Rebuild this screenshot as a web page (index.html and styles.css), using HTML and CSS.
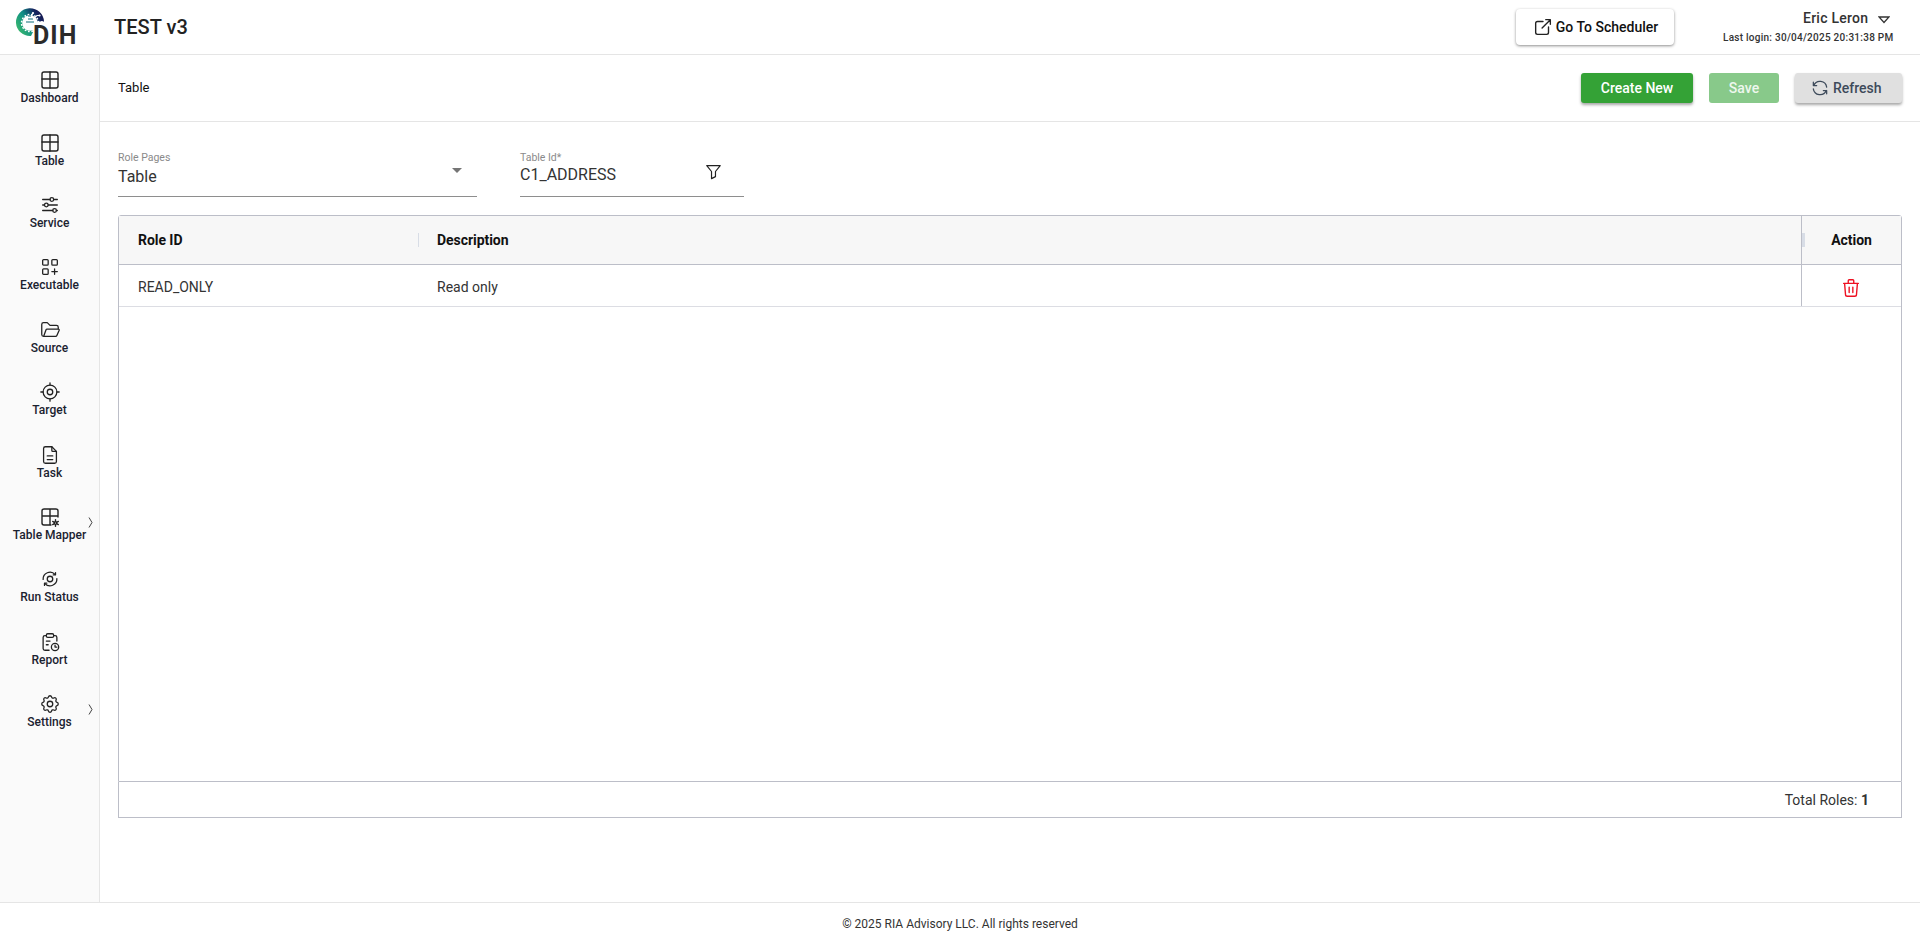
FILE: index.html
```html
<!DOCTYPE html>
<html lang="en">
<head>
<meta charset="utf-8">
<title>TEST v3</title>
<link rel="stylesheet" href="styles.css">
</head>
<body>
<svg class="sprites" width="0" height="0" aria-hidden="true">
  <symbol id="i-table" viewBox="-1 -1 22 22"><rect x="2" y="2" width="16" height="16" rx="2"/><path d="M2 9h16M10 2v16"/></symbol>
</svg>
<header class="topbar">
  <div class="brand">
    <svg class="logo-mark" viewBox="0 0 30 30" width="30" height="30" aria-hidden="true">
      <defs><linearGradient id="lg" x1="0" y1=".8" x2="1" y2=".2"><stop offset="0" stop-color="#3dbb6c"/><stop offset=".45" stop-color="#0e8e86"/><stop offset=".8" stop-color="#15235f"/><stop offset="1" stop-color="#16144a"/></linearGradient></defs>
      <path d="M29 13.500A14 14 0 0 0 1 15a14 14 0 0 0 15 13l2-4-2-9z" fill="url(#lg)"/>
      <circle class="gear-teeth" cx="15" cy="15" r="8.500"/>
      <circle cx="15" cy="15" r="7.800" fill="#fff"/>
      <path class="trace-in" d="M13 11h5M11 14h8M13 8l3 0"/>
      <path class="trace-out" d="M18 11l4-3.500h2M19 14h8M16 8l2-3"/>
      <circle cx="24.500" cy="7.500" r="1.100" fill="#fff"/>
      <circle cx="27" cy="14" r="1.100" fill="#fff"/>
      <circle cx="18" cy="5" r="1.100" fill="#fff"/>
    </svg>
    <span class="logo-text">DIH</span>
  </div>
  <h1 class="app-title">TEST v3</h1>
  <button class="scheduler-btn" type="button">
    <svg class="ico22" viewBox="0 0 24 24" aria-hidden="true"><path d="M12 6H6a2 2 0 0 0-2 2v10a2 2 0 0 0 2 2h10a2 2 0 0 0 2-2v-6"/><path d="M11 13l9-9M15 4h5v5"/></svg>
    Go To Scheduler
  </button>
  <div class="user">
    <div class="user-name">Eric Leron
      <svg class="user-caret" viewBox="0 0 12 8" width="12" height="8" aria-hidden="true"><path d="M1 1h10L6 6.500z"/></svg>
    </div>
    <div class="last-login">Last login: 30/04/2025 20:31:38 PM</div>
  </div>
</header>

<div class="body-row">
  <nav class="sidebar">
    <a class="nav-item"><svg class="nav-ico" viewBox="0 0 22 22"><use href="#i-table"/></svg><span>Dashboard</span></a>
    <a class="nav-item"><svg class="nav-ico" viewBox="0 0 22 22"><use href="#i-table"/></svg><span>Table</span></a>
    <a class="nav-item"><svg class="nav-ico" viewBox="0 0 24 24"><circle cx="14" cy="6" r="2"/><path d="M4 6h8M16 6h4"/><circle cx="8" cy="12" r="2"/><path d="M4 12h2M10 12h10"/><circle cx="17" cy="18" r="2"/><path d="M4 18h11M19 18h1"/></svg><span>Service</span></a>
    <a class="nav-item"><svg class="nav-ico" viewBox="0 0 24 24"><rect x="4" y="4" width="6" height="6" rx="1"/><rect x="14" y="4" width="6" height="6" rx="1"/><rect x="4" y="14" width="6" height="6" rx="1"/><path d="M14 17h6M17 14v6"/></svg><span>Executable</span></a>
    <a class="nav-item"><svg class="nav-ico" viewBox="0 0 24 24"><path d="M5 19l2.800-7.500A1 1 0 0 1 8.700 11H21a1 1 0 0 1 1 1.300L19.500 18a1.500 1.500 0 0 1-1.400 1H5a2 2 0 0 1-2-2V6a2 2 0 0 1 2-2h4l3 3h7a2 2 0 0 1 2 2v2"/></svg><span>Source</span></a>
    <a class="nav-item"><svg class="nav-ico" viewBox="0 0 24 24"><circle cx="12" cy="12" r="3"/><circle cx="12" cy="12" r="7.500"/><path d="M12 2v2.500M12 19.500V22M2 12h2.500M19.500 12H22"/></svg><span>Target</span></a>
    <a class="nav-item"><svg class="nav-ico" viewBox="0 0 24 24"><path d="M14 3v4a1 1 0 0 0 1 1h4"/><path d="M17 21H7a2 2 0 0 1-2-2V5a2 2 0 0 1 2-2h7l5 5v11a2 2 0 0 1-2 2z"/><path d="M9 13h6M9 17h6"/></svg><span>Task</span></a>
    <a class="nav-item has-sub"><svg class="nav-ico" viewBox="-1 -1 22 22"><path d="M18 10V4a2 2 0 0 0-2-2H4a2 2 0 0 0-2 2v12a2 2 0 0 0 2 2h7M2 9h16M10 2v16"/><circle cx="15.500" cy="16" r="1.300"/><path d="M15.500 12.700v1.300M15.500 18v1.300M12.700 14.400l1.200.7M17.100 16.900l1.200.7M12.700 17.600l1.200-.7M17.100 15.100l1.200-.7"/></svg><span>Table Mapper</span>
      <svg class="nav-chevron" viewBox="0 0 5 11"><path d="M1 .5l3 5-3 5"/></svg></a>
    <a class="nav-item"><svg class="nav-ico" viewBox="0 0 24 24"><circle cx="12" cy="12" r="3"/><path d="M4.500 12.500A7.500 7.500 0 0 1 17.500 7"/><path d="M19.500 11.500A7.500 7.500 0 0 1 6.500 17"/><path d="M18 5v2.500h-2.500M6 19v-2.500h2.500"/></svg><span>Run Status</span></a>
    <a class="nav-item"><svg class="nav-ico" viewBox="0 0 24 24"><path d="M8 5H6.500A2 2 0 0 0 4.500 7v12a2 2 0 0 0 2 2H11M16 5h1.500a2 2 0 0 1 2 2v4"/><rect x="8" y="3" width="8" height="4" rx="1.500"/><path d="M8 11h4M8 15h2"/><circle cx="17.500" cy="17.500" r="4"/><path d="M17.500 15.500v2h2"/></svg><span>Report</span></a>
    <a class="nav-item has-sub"><svg class="nav-ico" viewBox="0 0 24 24"><path d="M10.325 4.317c.426-1.756 2.924-1.756 3.350 0a1.724 1.724 0 0 0 2.573 1.066c1.543-.94 3.310.826 2.370 2.370a1.724 1.724 0 0 0 1.065 2.572c1.756.426 1.756 2.924 0 3.350a1.724 1.724 0 0 0-1.066 2.573c.94 1.543-.826 3.310-2.370 2.370a1.724 1.724 0 0 0-2.572 1.065c-.426 1.756-2.924 1.756-3.350 0a1.724 1.724 0 0 0-2.573-1.066c-1.543.94-3.310-.826-2.370-2.370a1.724 1.724 0 0 0-1.065-2.572c-1.756-.426-1.756-2.924 0-3.350a1.724 1.724 0 0 0 1.066-2.573c-.94-1.543.826-3.310 2.370-2.370 1 .608 2.296.07 2.572-1.065z"/><circle cx="12" cy="12" r="3"/></svg><span>Settings</span>
      <svg class="nav-chevron" viewBox="0 0 5 11"><path d="M1 .5l3 5-3 5"/></svg></a>
  </nav>

  <main class="content">
    <div class="subbar">
      <div class="crumb">Table</div>
      <div class="actions">
        <button class="btn btn-green" type="button">Create New</button>
        <button class="btn btn-save" type="button">Save</button>
        <button class="btn btn-grey" type="button">
          <svg class="ico20" viewBox="0 0 24 24" aria-hidden="true"><path d="M20 11A8.100 8.100 0 0 0 4.500 9M4 5v4h4"/><path d="M4 13a8.100 8.100 0 0 0 15.500 2m.5 4v-4h-4"/></svg>
          Refresh
        </button>
      </div>
    </div>

    <div class="panel">
      <div class="filters">
        <div class="field field-role">
          <label class="field-label">Role Pages</label>
          <div class="field-value">Table<span class="select-caret"></span></div>
        </div>
        <div class="field field-id">
          <label class="field-label">Table Id*</label>
          <div class="field-value">C1_ADDRESS
            <svg class="filter-ico" viewBox="0 0 24 24" aria-hidden="true"><path d="M3.500 4.500h17L14.500 12v6.500l-5 2.500v-9z"/></svg>
          </div>
        </div>
      </div>

      <div class="grid">
        <div class="grid-body">
          <div class="grid-row grid-head">
            <div class="cell cell-role">Role ID</div>
            <div class="cell cell-desc"><i class="col-sep"></i>Description</div>
            <div class="cell cell-action"><i class="col-sep"></i>Action</div>
          </div>
          <div class="grid-row grid-data">
            <div class="cell cell-role">READ_ONLY</div>
            <div class="cell cell-desc">Read only</div>
            <div class="cell cell-action">
              <svg class="trash" viewBox="0 0 24 24" aria-hidden="true"><path d="M4 7h16M10 11v6M14 11v6M5 7l1 12a2 2 0 0 0 2 2h8a2 2 0 0 0 2-2l1-12M9 7V4a1 1 0 0 1 1-1h4a1 1 0 0 1 1 1v3"/></svg>
            </div>
          </div>
        </div>
        <div class="grid-foot">Total Roles:&nbsp;<b>1</b></div>
      </div>
    </div>
  </main>
</div>

<footer class="footer">© 2025 RIA Advisory LLC. All rights reserved</footer>
</body>
</html>
```
FILE: styles.css
```css
* { box-sizing: border-box; }
html, body { height: 100%; }
body {
  margin: 0;
  height: 945px;
  display: flex;
  flex-direction: column;
  font-family: Roboto, "Liberation Sans", sans-serif;
  color: #1f2733;
  background: #fff;
  overflow: hidden;
}
.sprites { position: absolute; }

.topbar {
  height: 55px;
  flex: none;
  display: flex;
  align-items: center;
  border-bottom: 1px solid #e5e5e5;
  padding-right: 27px;
}
.brand {
  width: 114px;
  height: 54px;
  flex: none;
  position: relative;
}
.logo-mark { position: absolute; left: 15px; top: 8px; }
.gear-teeth { fill: none; stroke: #fff; stroke-width: 1.500; stroke-dasharray: 1.700 1.700; }
.trace-in { fill: none; stroke: #0f6f7a; stroke-width: 1.100; }
.trace-out { fill: none; stroke: #fff; stroke-width: 1.100; }
.logo-text {
  position: absolute;
  left: 33px;
  top: 22px;
  font: 700 25px/28px Roboto, sans-serif;
  letter-spacing: 1.100px;
  color: #2b2b2b;
}
.app-title {
  margin: 0;
  font-size: 20px;
  font-weight: 500;
  letter-spacing: .05px;
  color: #222;
}
.scheduler-btn {
  margin-left: auto;
  width: 158px;
  height: 36px;
  border: 0;
  border-radius: 4px;
  background: #fff;
  box-shadow: 0 1px 3px rgba(0,0,0,.45);
  display: flex;
  align-items: center;
  justify-content: center;
  gap: 2px;
  font: 500 14px Roboto, sans-serif;
  color: #111;
  padding: 0;
}
.ico22 { width: 22px; height: 22px; fill: none; stroke: #222; stroke-width: 1.500; stroke-linecap: round; stroke-linejoin: round; }
.user {
  width: 170px;
  margin-left: 49px;
  text-align: right;
}
.user-name {
  font-size: 14px;
  font-weight: 500;
  letter-spacing: .25px;
  line-height: 18px;
  color: #333;
  padding-right: 3px;
}
.user-caret { fill: none; stroke: #333; stroke-width: 1.300; margin-left: 6px; vertical-align: -1px; }
.last-login {
  margin-top: 4px;
  font-size: 10px;
  font-weight: 500;
  line-height: 14px;
  letter-spacing: .26px;
  white-space: nowrap;
  color: #333;
}

.body-row { flex: 1; display: flex; min-height: 0; }

.sidebar {
  width: 100px;
  flex: none;
  background: #fafafa;
  border-right: 1px solid #e5e5e5;
  padding-top: 2px;
}
.nav-item {
  height: 62.400px;
  display: flex;
  flex-direction: column;
  align-items: center;
  justify-content: center;
  position: relative;
  font-size: 12px;
  line-height: 16px;
  font-weight: 500;
  color: #1a2230;
  padding-bottom: 1px;
}
.nav-ico {
  width: 22px;
  height: 22px;
  fill: none;
  stroke: #222;
  stroke-width: 1.400;
  stroke-linecap: round;
  stroke-linejoin: round;
  margin-bottom: -1px;
}
.nav-chevron {
  position: absolute;
  right: 6px;
  top: 23px;
  width: 5px;
  height: 11px;
  fill: none;
  stroke: #444;
  stroke-width: 1;
}

.content { flex: 1; min-width: 0; display: flex; flex-direction: column; }
.subbar {
  height: 67px;
  flex: none;
  display: flex;
  align-items: center;
  border-bottom: 1px solid #e5e5e5;
  padding: 0 18px;
}
.crumb { font-size: 13px; font-weight: 400; color: #111; margin-top: -2px; }
.actions { margin-left: auto; display: flex; gap: 16px; }
.btn {
  height: 30px;
  border: 0;
  border-radius: 3px;
  display: flex;
  align-items: center;
  justify-content: center;
  gap: 6px;
  padding: 0;
  font: 500 14px Roboto, sans-serif;
}
.btn-green { width: 112px; background: #34a236; color: #fff; box-shadow: 0 2px 3px rgba(0,0,0,.35); }
.btn-save { width: 70px; background: #88c98a; color: #eef7ee; }
.btn-grey {
  width: 107px;
  background: #e0e0e0;
  color: #3d4a5a;
  box-shadow: 0 2px 3px rgba(0,0,0,.35);
  justify-content: flex-start;
  padding-left: 15px;
  gap: 3px;
}
.ico20 { width: 20px; height: 20px; fill: none; stroke: #3d4a5a; stroke-width: 1.500; stroke-linecap: round; stroke-linejoin: round; }

.panel { padding: 0 18px; }
.filters { height: 93px; display: flex; gap: 43px; padding-top: 29px; }
.field { height: 46px; border-bottom: 1px solid #8e8e8e; }
.field-role { width: 359px; }
.field-id { width: 224px; }
.field-label { display: block; font-size: 10.500px; line-height: 14px; color: #8a8a8a; }
.field-value {
  position: relative;
  font-size: 16px;
  line-height: 20px;
  margin-top: 2px;
  color: #333;
}
.select-caret {
  position: absolute;
  right: 15px;
  top: 1px;
  border: 5px solid transparent;
  border-top: 5px solid #757575;
}
.field-id .field-value { margin-top: 0; }
.filter-ico {
  position: absolute;
  right: 21px;
  top: -3px;
  width: 19px;
  height: 19px;
  fill: none;
  stroke: #222;
  stroke-width: 1.500;
  stroke-linejoin: round;
}

.grid { width: 1784px; }
.grid-body {
  height: 567px;
  border: 1px solid #bcbec8;
  border-radius: 3px 3px 0 0;
}
.grid-row { display: flex; }
.grid-head {
  height: 49px;
  background: #f7f7f7;
  border-bottom: 1px solid #bcbec8;
  font-size: 14px;
  font-weight: 700;
  letter-spacing: -.05px;
  color: #111;
}
.grid-data {
  height: 42px;
  border-bottom: 1px solid #dcdde3;
  font-size: 14px;
  color: #333;
}
.grid-data .cell { padding-top: 2px; }
.cell { display: flex; align-items: center; position: relative; }
.cell-role { width: 299px; padding-left: 19px; }
.cell-desc { flex: 1; padding-left: 19px; }
.cell-action {
  width: 100px;
  justify-content: center;
  border-left: 1px solid #bcbec8;
}
.grid-data .cell-action { padding: 4px 2px 0 0; }
.col-sep {
  position: absolute;
  left: 0;
  top: 17px;
  width: 1px;
  height: 14px;
  background: #d8dde6;
}
.cell-action .col-sep { left: 0; width: 3px; }
.trash {
  width: 22px;
  height: 22px;
  fill: none;
  stroke: #ee1122;
  stroke-width: 1.500;
  stroke-linecap: round;
  stroke-linejoin: round;
}
.grid-foot {
  height: 36px;
  border: 1px solid #bcbec8;
  border-top: 0;
  display: flex;
  align-items: center;
  justify-content: flex-end;
  padding-right: 32px;
  font-size: 14px;
  color: #333;
}
.grid-foot b { font-weight: 700; }

.footer {
  height: 43px;
  flex: none;
  border-top: 1px solid #e5e5e5;
  display: flex;
  align-items: center;
  justify-content: center;
  font-size: 12px;
  color: #333;
}
```
